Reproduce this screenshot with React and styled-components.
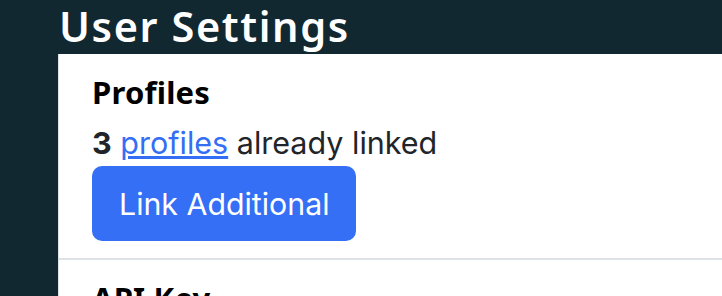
import React from 'react';
import styled, { createGlobalStyle } from 'styled-components';

const Global = createGlobalStyle`
  html, body { margin: 0; padding: 0; background: #112831; }
  body { width: 722px; height: 296px; overflow: hidden; }
`;

const Page = styled.div`
  padding-left: 58px;
`;

const Title = styled.h1`
  margin: 0;
  height: 54px;
  padding-left: 1px;
  font-family: "Noto Sans", sans-serif;
  font-weight: 600;
  font-size: 41.5px;
  letter-spacing: 1.6px;
  line-height: 52px;
  color: #ffffff;
  white-space: nowrap;
  overflow: hidden;
`;

const Panel = styled.div`
  background: #ffffff;
  border-left: 1px solid #dee2e6;
  min-height: 242px;
`;

const Section = styled.section`
  padding: 21px 33px 17px;
  border-bottom: ${p => (p.$last ? 'none' : '2px solid #dee2e6')};
`;

const Heading = styled.h2`
  margin: 0;
  font-family: "Noto Sans", sans-serif;
  font-weight: 700;
  font-size: 31px;
  letter-spacing: 0.2px;
  line-height: 34px;
  color: #000;
`;

const Text = styled.p`
  margin: 11px 0 0;
  font-family: Inter, "Noto Sans", sans-serif;
  font-size: 30.5px;
  line-height: 46px;
  color: #212529;
`;

const Strong = styled.strong`
  font-weight: 700;
`;

const Link = styled.a`
  color: #346ef5;
  text-decoration: underline;
  text-underline-offset: 2px;
`;

const Button = styled.button`
  display: inline-flex;
  align-items: center;
  height: 75px;
  padding: 0 26px 0 27px;
  border: none;
  border-radius: 10px;
  background: #346ff5;
  color: #fff;
  font-family: Inter, "Noto Sans", sans-serif;
  font-size: 30.3px;
  cursor: pointer;
`;

export default function App() {
  return (
    <>
      <Global />
      <Page>
        <Title>User Settings</Title>
        <Panel>
          <Section>
            <Heading>Profiles</Heading>
            <Text>
              <Strong>3</Strong> <Link href="#">profiles</Link> already linked
            </Text>
            <Button>Link Additional</Button>
          </Section>
          <Section $last>
            <Heading>API Key</Heading>
          </Section>
        </Panel>
      </Page>
    </>
  );
}
